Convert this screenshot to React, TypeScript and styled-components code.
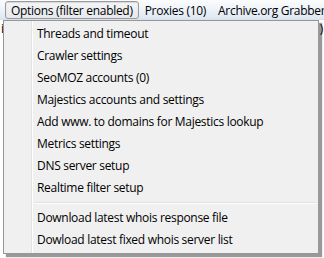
import styled, { createGlobalStyle } from "styled-components";

const GlobalStyle = createGlobalStyle`
  html, body {
    margin: 0;
    padding: 0;
    background: #ffffff;
  }
  body {
    font-family: "Open Sans", "Noto Sans", sans-serif;
    font-size: 12px;
    letter-spacing: -0.3px;
    color: #000;
  }
`;

const topMenus = [
  { label: "Options (filter enabled)", open: true },
  { label: "Proxies (10)", open: false },
  { label: "Archive.org Grabber", open: false },
];

const optionItems = [
  "Threads and timeout",
  "Crawler settings",
  "SeoMOZ accounts (0)",
  "Majestics accounts and settings",
  "Add www. to domains for Majestics lookup",
  "Metrics settings",
  "DNS server setup",
  "Realtime filter setup",
];

const whoisItems = [
  "Download latest whois response file",
  "Dowload latest fixed whois server list",
];

export default function App() {
  return (
    <>
      <GlobalStyle />
      <StyledWindow>
        <StyledMenuBar>
          {topMenus.map((m) => (
            <StyledTopItem key={m.label} $open={m.open}>
              {m.label}
            </StyledTopItem>
          ))}
        </StyledMenuBar>
        <StyledContentRow>
          <StyledCutText>i</StyledCutText>
          <StyledCutText>)</StyledCutText>
        </StyledContentRow>

        <StyledDropdown>
          {optionItems.map((item) => (
            <StyledItem key={item}>{item}</StyledItem>
          ))}
          <StyledSeparator />
          {whoisItems.map((item) => (
            <StyledItem key={item}>{item}</StyledItem>
          ))}
        </StyledDropdown>
      </StyledWindow>
    </>
  );
}

const StyledWindow = styled.div`
  position: relative;
  width: 324px;
  height: 258px;
  overflow: hidden;
  background: #ffffff;
`;

const StyledMenuBar = styled.div`
  display: flex;
  align-items: center;
  height: 19px;
  padding-left: 5px;
  gap: 0;
  background: linear-gradient(#fbfcfe 0%, #eef3f9 50%, #dde6f1 100%);
  border-bottom: 1px solid #d7e0ec;
  white-space: nowrap;
`;

const StyledTopItem = styled.div<{ $open: boolean }>`
  height: 18px;
  line-height: 17px;
  padding: 0 5px;
  box-sizing: border-box;
  border: 1px solid ${(p) => (p.$open ? "#9a9a9a" : "transparent")};
  border-radius: 3px;
  background: ${(p) =>
    p.$open ? "linear-gradient(#f4f5f7, #e6e8ec)" : "transparent"};
  box-shadow: ${(p) => (p.$open ? "inset 0 1px 1px rgba(0,0,0,0.12)" : "none")};
`;

const StyledContentRow = styled.div`
  display: flex;
  justify-content: space-between;
  height: 18px;
  line-height: 18px;
  padding: 0 1px;
`;

const StyledCutText = styled.span`
  font-size: 12px;
`;

const StyledDropdown = styled.div`
  position: absolute;
  top: 20px;
  left: 3px;
  width: 316px;
  box-sizing: border-box;
  padding: 2px;
  background: #f0f0f0;
  border: 1px solid #979797;
  box-shadow: 3px 3px 1px rgba(0, 0, 0, 0.4);
  background-image: linear-gradient(
    to right,
    transparent 0,
    transparent 27px,
    #e2e3e3 27px,
    #e2e3e3 28px,
    #ffffff 28px,
    #ffffff 29px,
    transparent 29px
  );
`;

const StyledItem = styled.div`
  height: 22px;
  line-height: 22px;
  padding-left: 31px;
  white-space: nowrap;
`;

const StyledSeparator = styled.div`
  height: 8px;
  margin-left: 29px;
  margin-right: 1px;
  display: flex;
  flex-direction: column;
  justify-content: center;
  &::before {
    content: "";
    display: block;
    height: 1px;
    background: #e0e0e0;
  }
  &::after {
    content: "";
    display: block;
    height: 1px;
    background: #ffffff;
  }
`;
